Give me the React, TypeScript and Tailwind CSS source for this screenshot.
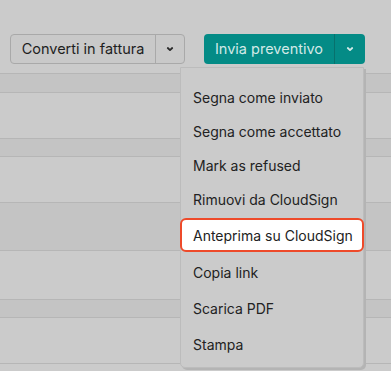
import React from "react";

function Chevron({ className }: { className?: string }) {
  return (
    <svg width="10" height="10" viewBox="0 0 10 10" className={className} fill="none">
      <path d="M2.8 4 L5 6.1 L7.2 4" stroke="currentColor" strokeWidth="1.8" strokeLinecap="round" strokeLinejoin="round" />
    </svg>
  );
}

const rows = [
  { h: 19, band: true },
  { h: 46, band: false },
  { h: 18, band: true },
  { h: 46, band: false },
  { h: 48, band: true },
  { h: 49, band: false },
  { h: 18, band: true },
  { h: 46, band: false },
];

const top = ["Segna come inviato", "Segna come accettato", "Mark as refused", "Rimuovi da CloudSign"];
const bottom = ["Copia link", "Scarica PDF", "Stampa"];

export default function App() {
  return (
    <div className="relative w-[391px] h-[371px] overflow-hidden bg-[#cbcbcb] font-['Inter',sans-serif] text-[14px] text-[#222222] whitespace-nowrap">
      <div className="flex h-[73px] items-start justify-between pl-[10px] pr-[26px] pt-[34px]">
        <div className="flex h-[30px] rounded-[4px] border border-[#a9a9a9] bg-[#c9c9c9]">
          <div className="flex w-[145px] items-center justify-center border-r border-[#a9a9a9] text-[14.5px] text-[#1e1e1e]">
            Converti in fattura
          </div>
          <div className="flex w-[28px] items-center justify-center text-[#2a2a2a]">
            <Chevron />
          </div>
        </div>
        <div className="flex h-[30px] overflow-hidden rounded-[4px] bg-[#048b86]">
          <div className="flex w-[131px] items-center justify-center border-r border-[#08716d] text-[14.5px] text-[#d3e9e7]">
            Invia preventivo
          </div>
          <div className="flex w-[30px] items-center justify-center text-[#d3e9e7]">
            <Chevron />
          </div>
        </div>
      </div>
      <div className="border-t border-[#b6b6b6]">
        {rows.map((r, i) => (
          <div
            key={i}
            className={`border-b border-[#b6b6b6] ${r.band ? "bg-[#c4c4c4]" : "bg-[#cbcbcb]"}`}
            style={{ height: r.h }}
          />
        ))}
      </div>

      <div className="absolute left-[180px] top-[67px] w-[184px] rounded-b-[5px] border border-[#bcbcbc] bg-[#cbcbcb] pb-[5px] pt-[12px] shadow-[2px_2px_0_0_#b4b4b4]">
        {top.map((t) => (
          <div key={t} className="flex h-[34px] items-center pl-[12px]">
            {t}
          </div>
        ))}
        <div className="-mx-[1px] mt-[2px] flex h-[34px] items-center rounded-[6px] border-2 border-[#ee4a2a] bg-white pl-[11px] text-[#222222]">
          Anteprima su CloudSign
        </div>
        <div className="mt-[2px]">
          {bottom.map((t) => (
            <div key={t} className="flex h-[36px] items-center pl-[12px]">
              {t}
            </div>
          ))}
        </div>
      </div>
    </div>
  );
}
